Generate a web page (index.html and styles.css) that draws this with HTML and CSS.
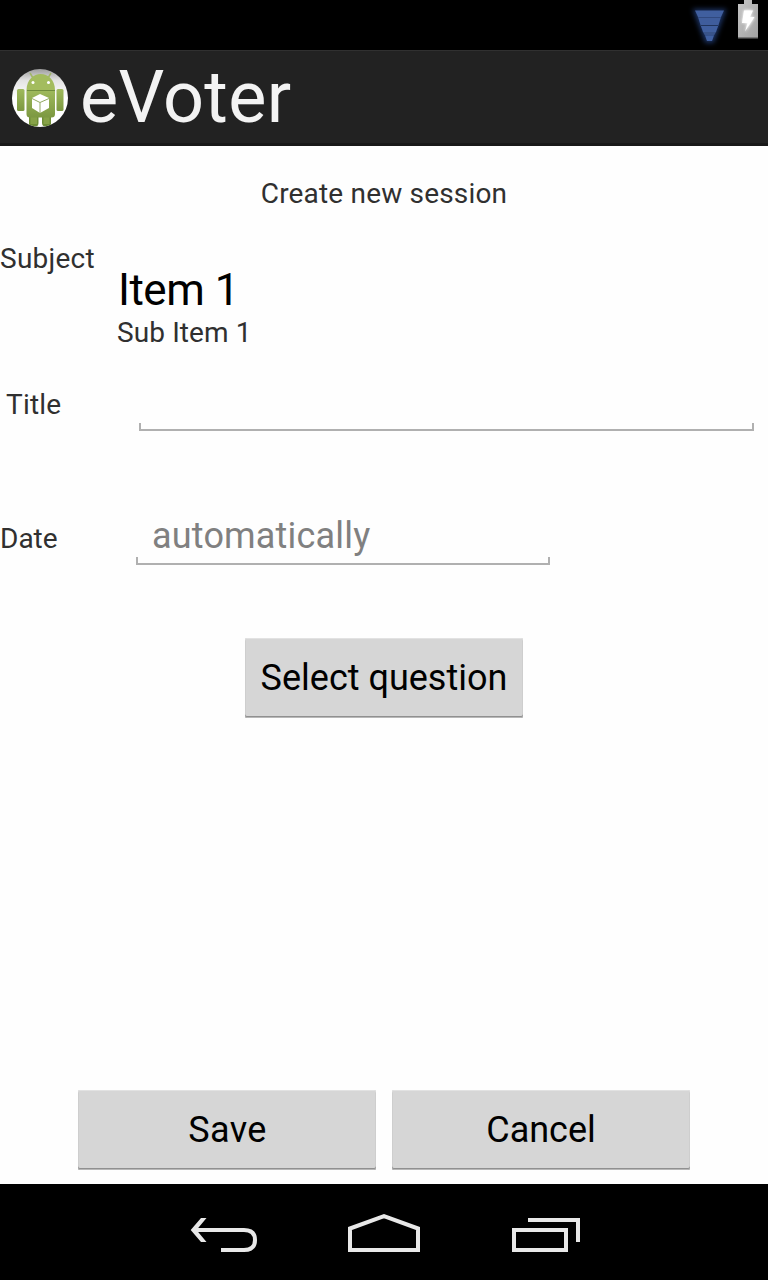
FILE: index.html
```html
<!DOCTYPE html>
<html lang="en">
<head>
<meta charset="utf-8">
<title>eVoter</title>
<link rel="stylesheet" href="styles.css">
</head>
<body>
<div class="status">
  <svg class="signal" width="44" height="50" viewBox="688 0 44 50">
    <path class="glow" d="M694 10H725L713 42H706Z"/>
    <path fill="#405f9f" d="M695 10.500H724L721 17H698Z"/>
    <path fill="#3f5d9c" d="M698 17H721L718.500 25H700.500Z"/>
    <path fill="#405f9f" d="M700.500 25H718.500L716 32H703Z"/>
    <path fill="#38538a" d="M703 32H716L714 35.500H705Z"/>
    <path fill="#4060a2" d="M705 35.500H714L712 41H707Z"/>
    <path fill="none" stroke="#30497f" d="M698 17.500H721"/>
    <path fill="none" stroke="#20345c" d="M701 25.500H718"/>
  </svg>
  <svg class="battery" width="24" height="44" viewBox="736 0 24 44">
    <defs><linearGradient id="bat" x1="0" y1="0" x2="1" y2="1"><stop offset="0" stop-color="#c6c6c6"/><stop offset="1" stop-color="#a2a2a2"/></linearGradient></defs>
    <path fill="url(#bat)" d="M744 0H752V4H758V38H738V4H744Z"/>
    <path fill="#777" d="M738 37H758V38.500H738Z"/>
    <path class="bolt-glow" d="M744 10H753L750 17H755L745 32L747 23H742Z"/>
    <path fill="#fff" d="M744 10.500H753L750 17H754.500L745 31.500L747.500 23H742Z"/>
  </svg>
</div>
<header class="bar">
  <svg width="60" height="62" viewBox="10 67 60 62">
    <defs>
      <linearGradient id="green" x1="0" y1="0" x2="0" y2="1"><stop offset="0" stop-color="#9fba5c"/><stop offset="1" stop-color="#7c9841"/></linearGradient>
      <linearGradient id="disc" x1="0" y1="0" x2="0" y2="1"><stop offset="0" stop-color="#9c9c9c"/><stop offset=".2" stop-color="#e4e4e4"/><stop offset=".5" stop-color="#fff"/></linearGradient>
      <clipPath id="round"><ellipse cx="40" cy="98" rx="28" ry="29"/></clipPath>
    </defs>
    <ellipse cx="40" cy="98" rx="28" ry="29" fill="url(#disc)"/>
    <g clip-path="url(#round)">
      <path fill="none" stroke="#a0b568" stroke-width="1.500" d="M33 78L30 73M48 78L51 73"/>
      <path fill="#a3bc5e" d="M26.500 90C27 68.500 54.500 68.500 55 90Z"/>
      <circle cx="33" cy="82.500" r="1.500" fill="#fff"/><circle cx="48.500" cy="82.500" r="1.500" fill="#fff"/>
      <path fill="#6e8d36" d="M29 116H38.500V123Q38.500 126.500 35 126.500H29ZM42 116H51V126.500H46Q42 126.500 42 123Z"/>
      <path fill="#87a248" d="M30.500 117H37V124H30.500ZM43.500 117H49.500V124H43.500Z"/>
      <path fill="url(#green)" d="M26.500 90H55V114Q55 117.500 51.500 117.500H30Q26.500 117.500 26.500 114Z"/>
      <path fill="none" stroke="#6f8c3c" d="M27 90.500H55"/>
      <rect x="17" y="89" width="7.500" height="22" rx="1.500" fill="url(#green)"/>
      <rect x="56.500" y="89" width="7" height="22" rx="1.500" fill="url(#green)"/>
    </g>
    <path fill="#fff" d="M40 94L49 98V108L40 113L32 108V98Z"/>
    <path fill="none" stroke="#93aa62" d="M32 98.500L40 102.500L49 98.500M40 102.500V113"/>
  </svg>
  <h1>eVoter</h1>
</header>
<main>
  <h2>Create new session</h2>
  <section class="row subject">
    <label class="label">Subject</label>
    <div class="item"><strong>Item 1</strong><span>Sub Item 1</span></div>
  </section>
  <section class="row name"><label class="label">Title</label><div class="field"></div></section>
  <section class="row date"><label class="label">Date</label><div class="field">automatically</div></section>
  <button class="btn select">Select question</button>
  <div class="actions"><button class="btn save">Save</button><button class="btn">Cancel</button></div>
</main>
<nav>
  <svg width="68" height="40" viewBox="190 1214 68 40"><path d="M196 1230H244Q255 1230 255 1240T244 1250H221"/><path class="solid" d="M201 1218H206.500L196.500 1230L206.500 1242H201L190.700 1230Z"/></svg>
  <svg width="72" height="40" viewBox="348 1214 72 40"><path d="M350 1250V1228.500L384 1216.200L418 1228.500V1250Z"/></svg>
  <svg width="68" height="40" viewBox="512 1214 68 40"><path d="M514 1230H566V1250H514ZM528 1220H578V1242"/></svg>
</nav>
</body>
</html>
```
FILE: styles.css
```css
* { box-sizing: border-box; }
body {
  margin: 0;
  width: 768px;
  height: 1280px;
  display: flex;
  flex-direction: column;
  background: #fefefe;
  color: #303030;
  font: 28px/34px Roboto, sans-serif;
  letter-spacing: .18px;
  overflow: hidden;
}
svg { display: block; flex: none; }
.status {
  height: 50px;
  background: #000;
  display: flex;
  justify-content: flex-end;
  gap: 4px;
  padding-right: 8px;
}
.glow { fill: #1c3363; stroke: #1c3363; stroke-width: 2; filter: blur(2.5px); }
.bolt-glow { fill: #fff; filter: blur(1.5px); }
.bar {
  height: 96px;
  background: #222;
  border-top: 1px solid #303030;
  border-bottom: 3px solid #191919;
  display: flex;
  align-items: center;
  gap: 10px;
  padding: 2px 0 0 10px;
}
h1 {
  margin: 0;
  font-size: 72px;
  line-height: 84px;
  font-weight: 400;
  letter-spacing: .3px;
  color: #f3f3f3;
}
main { height: 1038px; padding-top: 31px; display: flex; flex-direction: column; }
h2 { margin: 0 0 31px; font-size: 28px; font-weight: 400; text-align: center; }
.row { display: flex; flex: none; align-items: flex-start; }
.label { flex: none; }
.subject { height: 146px; }
.subject .label { width: 117px; letter-spacing: .25px; }
.item { padding-top: 23px; }
.item strong, .item span { display: block; }
.item span { letter-spacing: .1px; }
.item strong { color: #000; font-weight: 400; font-size: 44px; line-height: 51px; letter-spacing: -.5px; padding-left: 1px; }
.name { height: 134px; padding-left: 6px; }
.name .label { width: 133px; }
.name .field { width: 615px; }
.date { height: 116px; }
.date .label { width: 136px; letter-spacing: 0; }
.date .field { width: 414px; }
.field {
  height: 43px;
  padding-left: 16px;
  font-size: 36px;
  line-height: 28px;
  color: #808080;
  background:
    linear-gradient(#b0b0b0, #b0b0b0) left bottom / 100% 2px no-repeat,
    linear-gradient(#b0b0b0, #b0b0b0) left bottom / 2px 8px no-repeat,
    linear-gradient(#b0b0b0, #b0b0b0) right bottom / 2px 8px no-repeat;
}
.btn {
  width: 298px;
  height: 80px;
  padding: 0;
  border: 0;
  border-radius: 2px;
  background: #d6d6d6;
  box-shadow: inset 0 -1px #b8b8b8, inset 0 -2px #909090, inset 0 1px #e2e2e2, inset 1px 0 #cecece, inset -1px 0 #cecece;
  color: #000;
  font: 36px/76px Roboto, sans-serif;
}
.select { width: 278px; align-self: center; flex: none; }
.save { letter-spacing: .4px; padding-left: 1px; }
.actions { display: flex; justify-content: center; gap: 16px; margin-top: auto; padding-bottom: 14px; }
nav { height: 96px; background: #000; display: flex; padding: 30px 0 0 190px; }
nav svg + svg { margin-left: 90px; }
nav svg + svg + svg { margin-left: 92px; }
nav path { fill: none; stroke: #e8e8e8; stroke-width: 4; }
nav .solid { fill: #e8e8e8; stroke: none; }
```
